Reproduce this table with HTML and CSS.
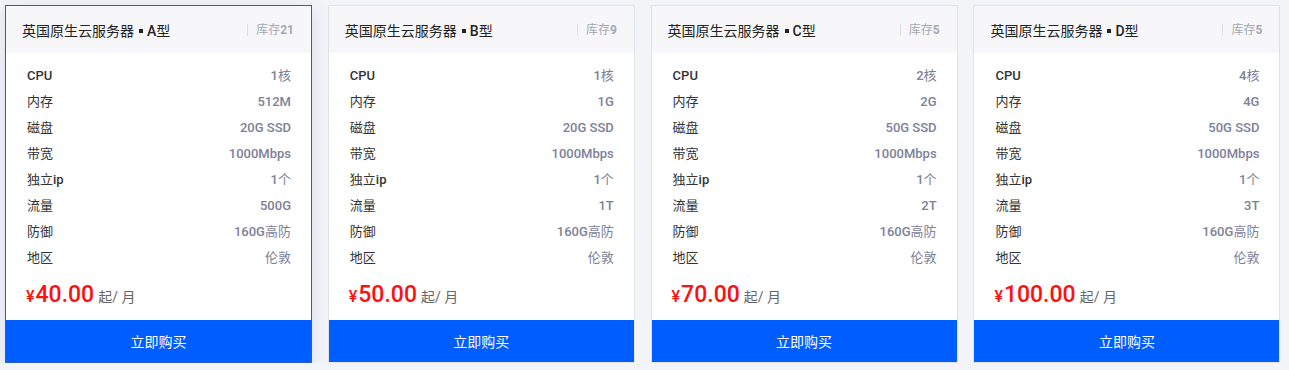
FILE: index.html
```html
<!DOCTYPE html>
<html lang="zh-CN">
<head>
<meta charset="utf-8">
<title>英国原生云服务器</title>
<link rel="stylesheet" href="styles.css">
</head>
<body>
<div class="plans">
  <div class="card active">
    <div class="card-head">
      <span class="title">英国原生云服务器<i class="dot"></i><b>A</b>型</span>
      <span class="stock">库存<b>21</b></span>
    </div>
    <div class="specs">
      <div class="row"><span class="k"><b>CPU</b></span><span class="v"><b>1</b>核</span></div>
      <div class="row"><span class="k">内存</span><span class="v"><b>512M</b></span></div>
      <div class="row"><span class="k">磁盘</span><span class="v"><b>20G SSD</b></span></div>
      <div class="row"><span class="k">带宽</span><span class="v"><b>1000Mbps</b></span></div>
      <div class="row"><span class="k">独立<b>ip</b></span><span class="v"><b>1</b>个</span></div>
      <div class="row"><span class="k">流量</span><span class="v"><b>500G</b></span></div>
      <div class="row"><span class="k">防御</span><span class="v"><b>160G</b>高防</span></div>
      <div class="row"><span class="k">地区</span><span class="v">伦敦</span></div>
    </div>
    <div class="price"><span class="cur">¥</span><span class="num">40.00</span><span class="unit">起/ 月</span></div>
    <a class="buy">立即购买</a>
  </div>
  <div class="card">
    <div class="card-head">
      <span class="title">英国原生云服务器<i class="dot"></i><b>B</b>型</span>
      <span class="stock">库存<b>9</b></span>
    </div>
    <div class="specs">
      <div class="row"><span class="k"><b>CPU</b></span><span class="v"><b>1</b>核</span></div>
      <div class="row"><span class="k">内存</span><span class="v"><b>1G</b></span></div>
      <div class="row"><span class="k">磁盘</span><span class="v"><b>20G SSD</b></span></div>
      <div class="row"><span class="k">带宽</span><span class="v"><b>1000Mbps</b></span></div>
      <div class="row"><span class="k">独立<b>ip</b></span><span class="v"><b>1</b>个</span></div>
      <div class="row"><span class="k">流量</span><span class="v"><b>1T</b></span></div>
      <div class="row"><span class="k">防御</span><span class="v"><b>160G</b>高防</span></div>
      <div class="row"><span class="k">地区</span><span class="v">伦敦</span></div>
    </div>
    <div class="price"><span class="cur">¥</span><span class="num">50.00</span><span class="unit">起/ 月</span></div>
    <a class="buy">立即购买</a>
  </div>
  <div class="card">
    <div class="card-head">
      <span class="title">英国原生云服务器<i class="dot"></i><b>C</b>型</span>
      <span class="stock">库存<b>5</b></span>
    </div>
    <div class="specs">
      <div class="row"><span class="k"><b>CPU</b></span><span class="v"><b>2</b>核</span></div>
      <div class="row"><span class="k">内存</span><span class="v"><b>2G</b></span></div>
      <div class="row"><span class="k">磁盘</span><span class="v"><b>50G SSD</b></span></div>
      <div class="row"><span class="k">带宽</span><span class="v"><b>1000Mbps</b></span></div>
      <div class="row"><span class="k">独立<b>ip</b></span><span class="v"><b>1</b>个</span></div>
      <div class="row"><span class="k">流量</span><span class="v"><b>2T</b></span></div>
      <div class="row"><span class="k">防御</span><span class="v"><b>160G</b>高防</span></div>
      <div class="row"><span class="k">地区</span><span class="v">伦敦</span></div>
    </div>
    <div class="price"><span class="cur">¥</span><span class="num">70.00</span><span class="unit">起/ 月</span></div>
    <a class="buy">立即购买</a>
  </div>
  <div class="card">
    <div class="card-head">
      <span class="title">英国原生云服务器<i class="dot"></i><b>D</b>型</span>
      <span class="stock">库存<b>5</b></span>
    </div>
    <div class="specs">
      <div class="row"><span class="k"><b>CPU</b></span><span class="v"><b>4</b>核</span></div>
      <div class="row"><span class="k">内存</span><span class="v"><b>4G</b></span></div>
      <div class="row"><span class="k">磁盘</span><span class="v"><b>50G SSD</b></span></div>
      <div class="row"><span class="k">带宽</span><span class="v"><b>1000Mbps</b></span></div>
      <div class="row"><span class="k">独立<b>ip</b></span><span class="v"><b>1</b>个</span></div>
      <div class="row"><span class="k">流量</span><span class="v"><b>3T</b></span></div>
      <div class="row"><span class="k">防御</span><span class="v"><b>160G</b>高防</span></div>
      <div class="row"><span class="k">地区</span><span class="v">伦敦</span></div>
    </div>
    <div class="price"><span class="cur">¥</span><span class="num">100.00</span><span class="unit">起/ 月</span></div>
    <a class="buy">立即购买</a>
  </div>
</div>
</body>
</html>
```
FILE: styles.css
```css
* { box-sizing: border-box; }
html, body { margin: 0; padding: 0; }
body {
  background: #f3f4f8;
  font-family: Roboto, "Noto Sans CJK SC", sans-serif;
  color: #333;
}
.plans {
  display: flex;
  gap: 15.8px;
  padding: 5px 0 0 5px;
}
.card {
  width: 307px;
  height: 358px;
  background: #fff;
  border: 1px solid #e2e3e9;
  display: flex;
  flex-direction: column;
}
.card.active {
  border-color: #2d5bc9;
  box-shadow: 0 4px 16px rgba(50, 80, 170, 0.14);
}
.card-head {
  height: 47px;
  background: #f7f7f9;
  display: flex;
  align-items: center;
  justify-content: space-between;
  padding: 0 17px 0 16px;
}
.title {
  font-size: 14px;
  color: #222;
}
.title b { font-weight: 500; }
.dot {
  display: inline-block;
  width: 4px;
  height: 4px;
  background: #222;
  margin: 0 4px 0 5px;
  vertical-align: 3px;
}
.stock {
  font-size: 12px;
  color: #a5a7b2;
  border-left: 1px solid #dcdde2;
  padding-left: 8px;
  line-height: 12px;
}
.stock b { font-weight: 700; }
.specs {
  padding: 10px 20px 0 21px;
}
.row {
  display: flex;
  justify-content: space-between;
  height: 26px;
  line-height: 26px;
  font-size: 13px;
}
.k { color: #333; font-weight: 400; }
.k b { font-weight: 500; }
.v { color: #7d8197; font-weight: 400; }
.v b { font-weight: 500; }
.price {
  padding: 10px 0 0 20px;
  height: 49px;
  color: #ff1010;
  display: flex;
  align-items: baseline;
}
.cur { font-size: 16px; font-weight: 500; }
.num { font-size: 23px; font-weight: 500; margin-left: 1px; }
.unit { font-size: 14px; color: #666; margin-left: 4px; }
.buy {
  display: flex;
  align-items: center;
  justify-content: center;
  height: 42px;
  margin-top: auto;
  background: #005dff;
  color: #fff;
  font-size: 14px;
  cursor: pointer;
}
```
